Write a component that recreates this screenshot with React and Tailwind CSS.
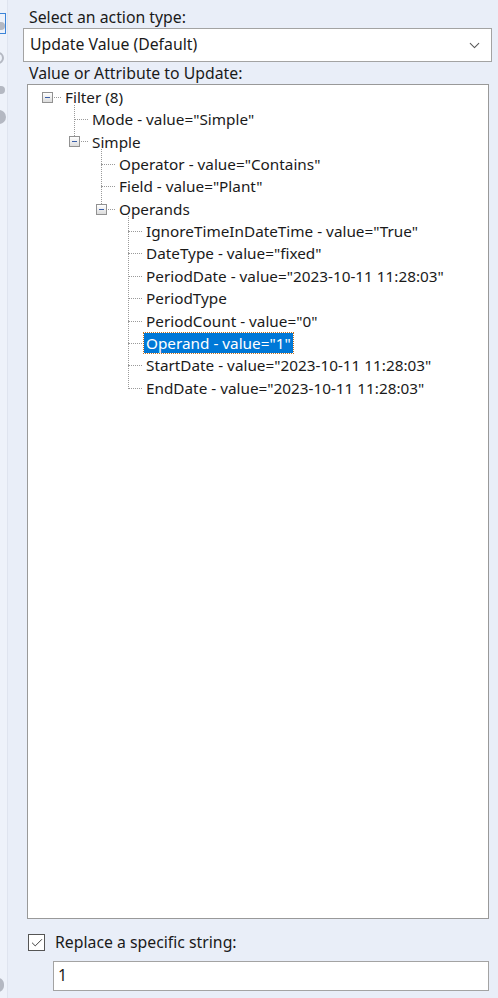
import React from "react";
import { ChevronDown, Check } from "lucide-react";

const FONT = { fontFamily: '"Noto Sans", "Open Sans", sans-serif' };

// tree rows: level, label, expander box, selected
const rows = [
  { lvl: 0, text: "Filter (8)", box: true },
  { lvl: 1, text: 'Mode - value="Simple"' },
  { lvl: 1, text: "Simple", box: true },
  { lvl: 2, text: 'Operator - value="Contains"' },
  { lvl: 2, text: 'Field - value="Plant"' },
  { lvl: 2, text: "Operands", box: true },
  { lvl: 3, text: 'IgnoreTimeInDateTime - value="True"' },
  { lvl: 3, text: 'DateType - value="fixed"' },
  { lvl: 3, text: 'PeriodDate - value="2023-10-11 11:28:03"' },
  { lvl: 3, text: "PeriodType" },
  { lvl: 3, text: 'PeriodCount - value="0"' },
  { lvl: 3, text: 'Operand - value="1"', selected: true },
  { lvl: 3, text: 'StartDate - value="2023-10-11 11:28:03"' },
  { lvl: 3, text: 'EndDate - value="2023-10-11 11:28:03"' },
];

function Expander() {
  return (
    <span className="relative z-10 flex h-[11px] w-[11px] items-center justify-center border border-[#919191] bg-gradient-to-b from-white to-[#dcdcdc]">
      <span className="h-[1px] w-[5px] bg-[#3a5ea8]" />
    </span>
  );
}

function TreeRow({ row }) {
  const indent = 14 + row.lvl * 27;
  return (
    <div className="relative flex h-[22.4px] items-center text-[15.3px]" style={{ paddingLeft: indent }}>
      {row.box ? (
        <>
          <Expander />
          <span className="ml-[1px] w-[7px] border-t border-dotted border-[#9a9a9a]" />
        </>
      ) : (
        <span className="ml-[5px] w-[14px] border-t border-dotted border-[#9a9a9a]" />
      )}
      <span
        className={
          row.selected
            ? "ml-[2px] bg-[#0078d7] px-[2px] leading-[20px] text-white outline outline-1 outline-dotted outline-[#c07020]"
            : "ml-[4px] text-[#1a1a1a]"
        }
      >
        {row.text}
      </span>
    </div>
  );
}

function SideStrip() {
  return (
    <div className="flex w-[8px] flex-col overflow-hidden bg-[#eef2fa] border-r border-[#dfe4ef]">
      <div className="mt-[13px] h-[21px] w-[6px] border-y border-r border-[#3c84d8]" />
      <div className="-ml-[7px] mt-[-12px] h-[8px] w-[12px] rounded-full bg-[#b4b8c2]" />
      <div className="-ml-[8px] mt-[22px] h-[12px] w-[12px] rounded-full border-2 border-[#b4b8c2]" />
      <div className="-ml-[7px] mt-[22px] h-[8px] w-[12px] rounded-full bg-[#b4b8c2]" />
      <div className="-ml-[8px] mt-[16px] h-[14px] w-[14px] rounded-full bg-[#b4b8c2]" />
      <div className="flex-1" />
      <div className="-ml-[8px] mb-[6px] h-[14px] w-[12px] rounded-full bg-[#b4b8c2]" />
    </div>
  );
}

export default function App() {
  return (
    <div className="flex h-[998px] w-[498px] bg-[#e9eef8] text-[15.8px]" style={FONT}>
      <SideStrip />
      <div className="flex flex-1 flex-col pl-[15px] pr-[6px]">
        <p className="mt-[7px] ml-[6px] leading-[20px] text-[#1a1a1a]">Select an action type:</p>
        <div className="mt-[1px] flex h-[34px] items-center justify-between border border-[#a3a3a3] bg-white pl-[6px] pr-[8px] text-[#1a1a1a]">
          <span>Update Value (Default)</span>
          <ChevronDown size={17} strokeWidth={1.5} className="text-[#5a5a5a]" />
        </div>
        <p className="mt-[1px] ml-[6px] leading-[20px] text-[#1a1a1a]">Value or Attribute to Update:</p>
        <div className="relative ml-[4px] mr-[3px] mt-[1px] h-[835px] border border-[#999] bg-white pt-[1px]">
          {/* dotted guide lines */}
          <div className="absolute left-[46px] top-[20px] h-[37px] border-l border-dotted border-[#9a9a9a]" />
          <div className="absolute left-[73px] top-[64px] h-[61px] border-l border-dotted border-[#9a9a9a]" />
          <div className="absolute left-[100px] top-[131px] h-[173px] border-l border-dotted border-[#9a9a9a]" />
          {rows.map((r, i) => (
            <TreeRow key={i} row={r} />
          ))}
        </div>
        <div className="ml-[5px] mt-[12px] flex items-center">
          <span className="flex h-[17px] w-[17px] items-center justify-center border border-[#555] bg-white">
            <Check size={14} strokeWidth={1.6} className="text-[#333]" />
          </span>
          <span className="ml-[10px] text-[#1a1a1a]">Replace a specific string:</span>
        </div>
        <div className="ml-[30px] mr-[3px] mt-[6px] flex h-[30px] items-center border border-[#a3a3a3] bg-white pl-[4px] text-[#1a1a1a]">
          1
        </div>
      </div>
    </div>
  );
}
